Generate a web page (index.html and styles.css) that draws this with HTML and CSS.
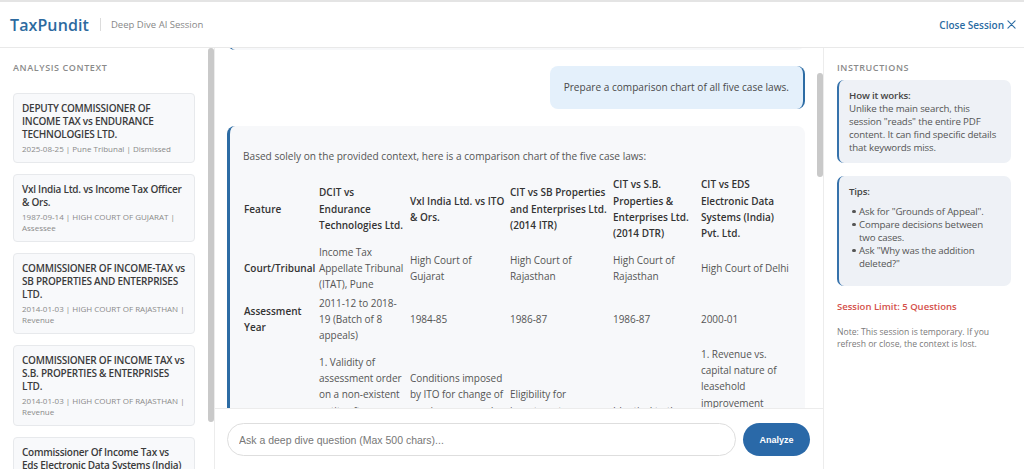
FILE: index.html
```html
<!DOCTYPE html>
<html lang="en">
<head>
<meta charset="utf-8">
<title>TaxPundit - Deep Dive AI Session</title>
<link rel="stylesheet" href="styles.css">
</head>
<body>
<div class="app">
  <header class="topbar">
    <div class="brand">
      <span class="logo">TaxPundit</span>
      <span class="divider"></span>
      <span class="session-name">Deep Dive AI Session</span>
    </div>
    <a class="close-link" href="#">Close Session
      <svg class="close-icon" viewBox="0 0 10 10" width="9" height="9"><path d="M1 1 L9 9 M9 1 L1 9" stroke="currentColor" stroke-width="1.2" fill="none" stroke-linecap="round"/></svg>
    </a>
  </header>

  <div class="workspace">
    <aside class="context">
      <h2 class="panel-title">ANALYSIS CONTEXT</h2>
      <div class="case-list">
        <div class="case-card">
          <div class="case-title">DEPUTY COMMISSIONER OF INCOME TAX vs ENDURANCE TECHNOLOGIES LTD.</div>
          <div class="case-meta">2025-08-25 | Pune Tribunal | Dismissed</div>
        </div>
        <div class="case-card">
          <div class="case-title">Vxl India Ltd. vs Income Tax Officer &amp; Ors.</div>
          <div class="case-meta">1987-09-14 | HIGH COURT OF GUJARAT | Assessee</div>
        </div>
        <div class="case-card">
          <div class="case-title">COMMISSIONER OF INCOME-TAX vs SB PROPERTIES AND ENTERPRISES LTD.</div>
          <div class="case-meta">2014-01-03 | HIGH COURT OF RAJASTHAN | Revenue</div>
        </div>
        <div class="case-card">
          <div class="case-title">COMMISSIONER OF INCOME TAX vs S.B. PROPERTIES &amp; ENTERPRISES LTD.</div>
          <div class="case-meta">2014-01-03 | HIGH COURT OF RAJASTHAN | Revenue</div>
        </div>
        <div class="case-card">
          <div class="case-title">Commissioner Of Income Tax vs Eds Electronic Data Systems (India) Pvt. Ltd.</div>
          <div class="case-meta">2013-11-29 | HIGH COURT OF DELHI | Revenue</div>
        </div>
      </div>
      <div class="scroll-thumb thumb-context"></div>
    </aside>

    <main class="chat">
      <div class="thread">
        <div class="msg-ai msg-prev"></div>
        <div class="msg-user">Prepare a comparison chart of all five case laws.</div>
        <div class="msg-ai">
          <p>Based solely on the provided context, here is a comparison chart of the five case laws:</p>
          <table class="compare">
            <colgroup>
              <col class="c1"><col class="c2"><col class="c3"><col class="c4"><col class="c5"><col class="c6">
            </colgroup>
            <thead>
              <tr>
                <th>Feature</th>
                <th>DCIT vs Endurance Technologies Ltd.</th>
                <th>Vxl India Ltd. vs ITO &amp; Ors.</th>
                <th>CIT vs SB Properties and Enterprises Ltd. (2014 ITR)</th>
                <th>CIT vs S.B. Properties &amp; Enterprises Ltd. (2014 DTR)</th>
                <th>CIT vs EDS Electronic Data Systems (India) Pvt. Ltd.</th>
              </tr>
            </thead>
            <tbody>
              <tr>
                <th>Court/Tribunal</th>
                <td>Income Tax Appellate Tribunal (ITAT), Pune</td>
                <td>High Court of Gujarat</td>
                <td>High Court of Rajasthan</td>
                <td>High Court of Rajasthan</td>
                <td>High Court of Delhi</td>
              </tr>
              <tr>
                <th>Assessment Year</th>
                <td>2011-12 to 2018-19 (Batch of 8 appeals)</td>
                <td>1984-85</td>
                <td>1986-87</td>
                <td>1986-87</td>
                <td>2000-01</td>
              </tr>
              <tr>
                <th>Key Issue</th>
                <td>1. Validity of<br>assessment order<br>on a non-existent<br>entity after<br>amalgamation.<br>2. Validity of<br>reopening under<br>Section 148.</td>
                <td>Conditions imposed<br>by ITO for change of<br>previous year under<br>Section 3(3) of the<br>Income Tax Act,<br>1961.</td>
                <td>Eligibility for<br>investment<br>allowance on<br>hotel business.</td>
                <td>Identical to the<br>previous case.</td>
                <td>1. Revenue vs.<br>capital nature of<br>leasehold<br>improvement<br>expenses.<br>2. Allowability<br>of depreciation<br>on leased<br>premises.</td>
              </tr>
            </tbody>
          </table>
        </div>
        <div class="scroll-thumb thumb-chat"></div>
      </div>
      <form class="composer" onsubmit="return false">
        <input class="ask-input" type="text" placeholder="Ask a deep dive question (Max 500 chars)...">
        <button class="analyze-btn" type="submit">Analyze</button>
      </form>
    </main>

    <aside class="instructions">
      <h2 class="panel-title">INSTRUCTIONS</h2>
      <div class="info-box">
        <div class="info-head">How it works:</div>
        <div class="info-text">Unlike the main search, this session "reads" the entire PDF content. It can find specific details that keywords miss.</div>
      </div>
      <div class="info-box">
        <div class="info-head">Tips:</div>
        <ul class="tips">
          <li>Ask for "Grounds of Appeal".</li>
          <li>Compare decisions between two cases.</li>
          <li>Ask "Why was the addition deleted?"</li>
        </ul>
      </div>
      <div class="limit">Session Limit: 5 Questions</div>
      <div class="note">Note: This session is temporary. If you refresh or close, the context is lost.</div>
    </aside>
  </div>
</div>
</body>
</html>
```

FILE: styles.css
```css
* { box-sizing: border-box; }

html, body {
  margin: 0;
  padding: 0;
  height: 100%;
}

body {
  font-family: "Open Sans", "Noto Sans", sans-serif;
  color: #444;
  background: #fff;
  overflow: hidden;
}

.app {
  height: 469px;
  display: flex;
  flex-direction: column;
}

/* Header */
.topbar {
  height: 48px;
  flex: 0 0 48px;
  border-top: 2px solid #e4e4e4;
  border-bottom: 1px solid #e9e9e9;
  display: flex;
  align-items: center;
  justify-content: space-between;
  padding: 0 8px 0 10px;
}

.brand {
  display: flex;
  align-items: center;
}

.logo {
  font-size: 16px;
  font-weight: 600;
  color: #2d6a9f;
  letter-spacing: 0.1px;
}

.divider {
  width: 1px;
  height: 13px;
  background: #dcdcdc;
  margin: 0 10px 0 11px;
}

.session-name {
  font-size: 9.5px;
  color: #888;
}

.close-link {
  font-size: 10px;
  font-weight: 600;
  color: #2b6ca3;
  text-decoration: none;
  display: flex;
  align-items: center;
  gap: 3px;
}

.close-icon { display: block; }

/* Workspace */
.workspace {
  flex: 1;
  display: flex;
  min-height: 0;
}

.panel-title {
  margin: 0;
  font-size: 9px;
  line-height: 12px;
  font-weight: 600;
  letter-spacing: 0.6px;
  color: #8a8a8a;
}

.scroll-thumb {
  position: absolute;
  right: 0;
  width: 6px;
  background: #c9c9c9;
  border-radius: 3px;
}

/* Left context panel */
.context {
  position: relative;
  width: 215px;
  flex: 0 0 215px;
  border-right: 1px solid #ececec;
  padding: 14px 19px 0 13px;
  overflow: hidden;
}

.context .panel-title { margin-bottom: 19px; }

.thumb-context {
  top: 0;
  height: 374px;
}

.case-list {
  display: flex;
  flex-direction: column;
  gap: 11px;
}

.case-card {
  background: #f8f9fb;
  border: 1px solid #e7e9ec;
  border-radius: 4px;
  padding: 8px 8px;
}

.case-title {
  font-size: 10px;
  line-height: 13px;
  font-weight: 600;
  letter-spacing: -0.25px;
  color: #3b3b3b;
}

.case-meta {
  margin-top: 2px;
  font-size: 8px;
  line-height: 11px;
  color: #8a8a8a;
}

/* Chat */
.chat {
  flex: 1;
  min-width: 0;
  display: flex;
  flex-direction: column;
}

.thread {
  position: relative;
  flex: 1;
  min-height: 0;
  overflow: hidden;
  padding: 0 18px 0 12px;
}

.thumb-chat {
  top: 25px;
  height: 104px;
}

.msg-ai {
  background: #f7f8fa;
  border-left: 3px solid #2d6ca4;
  border-radius: 8px;
  padding: 12px 13px;
  margin-top: 17px;
  font-size: 10px;
  line-height: 16.33px;
  color: #555;
}

.msg-prev {
  height: 30px;
  margin-top: -28px;
  padding: 0;
}

.msg-ai p {
  margin: 10.5px 0 10px;
  font-size: 10.1px;
}

.msg-user {
  width: fit-content;
  margin: 16px 0 0 auto;
  background: #e4f0fb;
  border-right: 2px solid #2d6ca4;
  border-radius: 8px;
  padding: 13px 14px;
  font-size: 10.1px;
  line-height: 16.5px;
  color: #4a4a4a;
}

.compare {
  table-layout: fixed;
  border-spacing: 2px;
  margin: 0 -2px;
  width: calc(100% + 4px);
}

.compare .c1 { width: 73px; }
.compare .c2 { width: 89px; }
.compare .c3 { width: 98px; }
.compare .c4 { width: 101px; }
.compare .c5 { width: 86px; }

.compare th,
.compare td {
  padding: 0 1px;
  text-align: left;
  vertical-align: middle;
  font-size: 10px;
  line-height: 16.33px;
}

.compare th {
  font-weight: 600;
  color: #333;
}

.compare td {
  font-weight: 400;
  color: #555;
  letter-spacing: -0.05px;
}

/* Composer */
.composer {
  flex: 0 0 61px;
  border-top: 1px solid #ececec;
  padding: 14px 13px 13px 12px;
  margin: 0;
  display: flex;
  gap: 7px;
}

.ask-input {
  flex: 1;
  min-width: 0;
  height: 33px;
  border: 1px solid #dedede;
  border-radius: 17px;
  padding: 0 11px;
  font-family: "Liberation Sans", Arial, sans-serif;
  font-size: 10.5px;
  color: #444;
  background: #fff;
  outline: none;
}

.ask-input::placeholder { color: #777; }

.analyze-btn {
  width: 67px;
  height: 33px;
  border: none;
  border-radius: 17px;
  background: #2a69a8;
  color: #fff;
  font-family: "Liberation Sans", Arial, sans-serif;
  font-weight: 700;
  font-size: 9px;
  padding: 0;
}

/* Instructions */
.instructions {
  width: 201px;
  flex: 0 0 201px;
  border-left: 1px solid #ececec;
  padding: 14px 13px 0 13px;
}

.instructions .panel-title { margin-bottom: 6px; }

.info-box {
  background: #eef1f6;
  border-left: 2px solid #3672ab;
  border-radius: 7px;
  padding: 9px 10px 9px 10px;
  margin-bottom: 13px;
  font-size: 9.7px;
  line-height: 13px;
  letter-spacing: -0.15px;
  color: #555;
}

.info-head {
  font-weight: 600;
  color: #444;
}

.tips {
  list-style: none;
  margin: 7px 0 7px;
  padding-left: 10px;
}

.tips li::before {
  content: "";
  display: inline-block;
  width: 3.5px;
  height: 3.5px;
  border-radius: 50%;
  background: #555;
  margin: 0 3.5px 0 -7px;
  vertical-align: 2px;
}

.limit {
  margin-top: 14px;
  font-size: 9.5px;
  line-height: 13px;
  font-weight: 600;
  color: #d4504a;
}

.note {
  margin-top: 13px;
  font-size: 8.6px;
  line-height: 12px;
  color: #7a7a7a;
}
```
